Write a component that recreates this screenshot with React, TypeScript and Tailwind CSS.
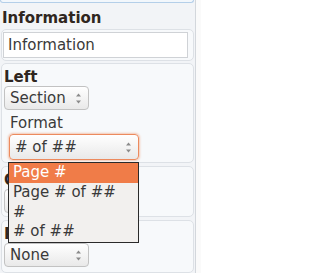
import React from 'react';

const Arrows: React.FC = () => (
  <svg width="7" height="13" viewBox="0 0 7 13" className="shrink-0">
    <path d="M3.5 1.5 L6 4.5 H1 Z" fill="#8a8a8a" />
    <path d="M3.5 11.5 L6 8.5 H1 Z" fill="#8a8a8a" />
  </svg>
);

const Select: React.FC<{ label: string; width: string; focused?: boolean }> = ({ label, width, focused }) => (
  <div
    className={`${width} flex items-center justify-between rounded-[4px] border bg-gradient-to-b from-white to-[#e9e9e9] pl-[5px] pr-[6px] text-[15px] text-[#3a3a3a] ${
      focused
        ? 'h-[26px] border-[#ec8a5e] shadow-[0_0_2px_1px_rgba(240,140,90,0.45)]'
        : 'h-[24px] border-[#c2c2c2]'
    }`}
  >
    <span>{label}</span>
    <Arrows />
  </div>
);

const Heading: React.FC<{ children: React.ReactNode }> = ({ children }) => (
  <div className="text-[15px] font-bold leading-[18px] text-[#2f2620]">{children}</div>
);

const Box: React.FC<{ children: React.ReactNode; className?: string }> = ({ children, className = '' }) => (
  <div className={`mx-[1px] rounded-[5px] border border-[#dde1e6] bg-[#f7f9fb] ${className}`}>{children}</div>
);

export default function App() {
  const items = ['Page #', 'Page # of ##', '#', '# of ##'];
  return (
    <div
      className="relative h-[273px] w-[201px] overflow-hidden bg-[#fafafa]"
      style={{ fontFamily: '"DejaVu Sans", Verdana, sans-serif' }}
    >
      <div className="flex h-full w-[196px] flex-col border-r border-[#d3d7dc] bg-[#f2f4f7]">
        <div className="mr-[1px] h-[3px] rounded-b-[3px] border-x border-b border-[#b4cfe9] bg-[#f2f7fc]" />

        <div className="mt-[6px] pl-[2px]">
          <Heading>Information</Heading>
        </div>

        <Box className="mt-[2px] py-[2px] pl-[1px]">
          <div className="flex h-[26px] w-[185px] items-center border border-[#cfd2d6] bg-white pl-[4px] text-[15px] text-[#3a3a3a]">
            Information
          </div>
        </Box>

        <Box className="mt-[2px] pb-[2px] pl-[2px] pt-[4px]">
          <Heading>Left</Heading>
          <Select label="Section" width="w-[85px]" />
          <div className="mt-[4px] pl-[5px]">
            <div className="pl-[1px] text-[15px] leading-[18px] text-[#3a3a3a]">Format</div>
            <div className="mt-[2px]">
              <Select label="# of ##" width="w-[130px]" focused />
            </div>
          </div>
        </Box>

        <Box className="mt-[3px] pb-[3px] pl-[2px] pt-[4px]">
          <Heading>Center</Heading>
          <Select label="Section" width="w-[85px]" />
        </Box>

        <Box className="mt-[3px] flex-1 pl-[2px] pt-[4px]">
          <Heading>Right</Heading>
          <Select label="None" width="w-[85px]" />
        </Box>
      </div>

      <div className="absolute left-[8px] top-[162px] w-[131px] border border-[#2a2a2a] bg-[#f2f0ee] text-[15px] text-[#3a3a3a]">
        {items.map((item, i) => (
          <div
            key={item}
            className={`h-[19.75px] pl-[4px] leading-[19.75px] ${i === 0 ? 'bg-[#f07c48] text-white' : ''}`}
          >
            {item}
          </div>
        ))}
      </div>
    </div>
  );
}
